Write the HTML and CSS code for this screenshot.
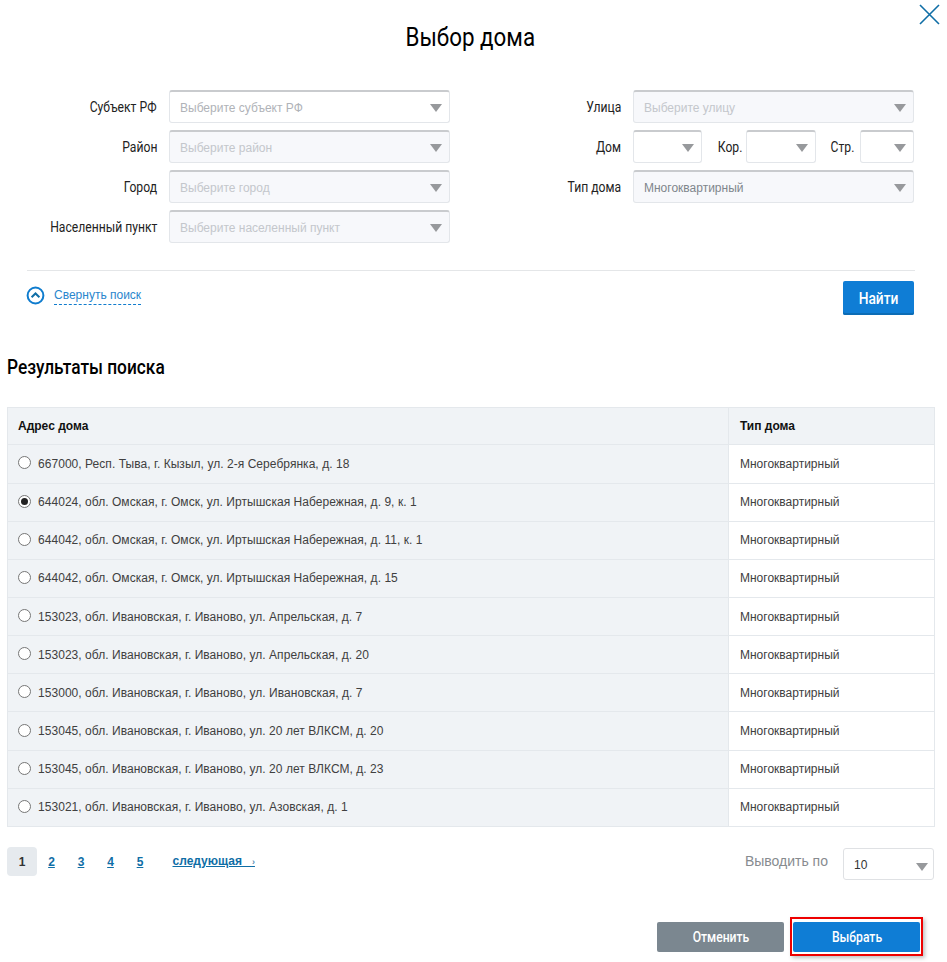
FILE: index.html
```html
<!DOCTYPE html>
<html lang="ru">
<head>
<meta charset="utf-8">
<title>Выбор дома</title>
<link rel="stylesheet" href="styles.css">
</head>
<body>
<main class="modal">
  <button class="close" aria-label="Закрыть"><svg width="21" height="21" viewBox="0 0 21 21"><path d="M1 1l19 19M20 1L1 20" stroke="#0f6ea6" stroke-width="1.6" fill="none"/></svg></button>
  <h1 class="title"><span>Выбор дома</span></h1>
  <section class="search">
    <div class="col">
      <div class="row"><label class="lab"><span>Субъект РФ</span></label><div class="sel white"><span class="ph">Выберите субъект РФ</span><i class="arrow"></i></div></div>
      <div class="row"><label class="lab"><span>Район</span></label><div class="sel"><span class="ph">Выберите район</span><i class="arrow"></i></div></div>
      <div class="row"><label class="lab"><span>Город</span></label><div class="sel"><span class="ph">Выберите город</span><i class="arrow"></i></div></div>
      <div class="row"><label class="lab"><span>Населенный пункт</span></label><div class="sel"><span class="ph">Выберите населенный пункт</span><i class="arrow"></i></div></div>
    </div>
    <div class="col">
      <div class="row"><label class="lab"><span>Улица</span></label><div class="sel"><span class="ph">Выберите улицу</span><i class="arrow"></i></div></div>
      <div class="row"><label class="lab"><span>Дом</span></label>
        <div class="house">
          <div class="sel s-dom white"><i class="arrow"></i></div>
          <label class="lab lab2 l-kor"><span>Кор.</span></label>
          <div class="sel s-kor white"><i class="arrow"></i></div>
          <label class="lab lab2 l-str"><span>Стр.</span></label>
          <div class="sel s-str white"><i class="arrow"></i></div>
        </div>
      </div>
      <div class="row"><label class="lab"><span>Тип дома</span></label><div class="sel"><span class="val">Многоквартирный</span><i class="arrow"></i></div></div>
    </div>
  </section>
  <div class="actions">
    <a class="toggle" href="#"><svg width="19" height="19" viewBox="0 0 19 19"><circle cx="9.5" cy="9.5" r="7.9" fill="none" stroke="#0f7cce" stroke-width="2"/><path d="M5.6 11.2l3.9-3.7 3.9 3.7" fill="none" stroke="#0f6ea6" stroke-width="2"/></svg><span>Свернуть поиск</span></a>
    <button class="btn find"><span>Найти</span></button>
  </div>
  <h2 class="results"><span>Результаты поиска</span></h2>
  <div class="tbl">
    <div class="cell head">Адрес дома</div><div class="cell head c2">Тип дома</div>
    <div class="cell"><i class="radio"></i>667000, Респ. Тыва, г. Кызыл, ул. 2-я Серебрянка, д. 18</div><div class="cell c2">Многоквартирный</div>
    <div class="cell"><i class="radio on"></i>644024, обл. Омская, г. Омск, ул. Иртышская Набережная, д. 9, к. 1</div><div class="cell c2">Многоквартирный</div>
    <div class="cell"><i class="radio"></i>644042, обл. Омская, г. Омск, ул. Иртышская Набережная, д. 11, к. 1</div><div class="cell c2">Многоквартирный</div>
    <div class="cell"><i class="radio"></i>644042, обл. Омская, г. Омск, ул. Иртышская Набережная, д. 15</div><div class="cell c2">Многоквартирный</div>
    <div class="cell"><i class="radio"></i>153023, обл. Ивановская, г. Иваново, ул. Апрельская, д. 7</div><div class="cell c2">Многоквартирный</div>
    <div class="cell"><i class="radio"></i>153023, обл. Ивановская, г. Иваново, ул. Апрельская, д. 20</div><div class="cell c2">Многоквартирный</div>
    <div class="cell"><i class="radio"></i>153000, обл. Ивановская, г. Иваново, ул. Ивановская, д. 7</div><div class="cell c2">Многоквартирный</div>
    <div class="cell"><i class="radio"></i>153045, обл. Ивановская, г. Иваново, ул. 20 лет ВЛКСМ, д. 20</div><div class="cell c2">Многоквартирный</div>
    <div class="cell"><i class="radio"></i>153045, обл. Ивановская, г. Иваново, ул. 20 лет ВЛКСМ, д. 23</div><div class="cell c2">Многоквартирный</div>
    <div class="cell"><i class="radio"></i>153021, обл. Ивановская, г. Иваново, ул. Азовская, д. 1</div><div class="cell c2">Многоквартирный</div>
  </div>
  <div class="pager">
    <nav class="pages">
      <span class="page cur">1</span><a class="page" href="#">2</a><a class="page" href="#">3</a><a class="page" href="#">4</a><a class="page" href="#">5</a>
      <a class="next" href="#">следующая &nbsp; <small>›</small></a>
    </nav>
    <div class="perpage"><span>Выводить по</span><div class="sel white s-per"><span class="num">10</span><i class="arrow"></i></div></div>
  </div>
  <div class="footer">
    <button class="btn cancel"><span>Отменить</span></button>
    <div class="focus"><button class="btn pick"><span>Выбрать</span></button></div>
  </div>
</main>
</body>
</html>
```
FILE: styles.css
```css
* { box-sizing: border-box; }
html, body { margin: 0; background: #fff; }
body { font-family: "Liberation Sans", Arial, sans-serif; color: #333; width: 947px; height: 962px; overflow: hidden; }
.modal { position: relative; height: 962px; padding: 0 12px 0 7px; }
.close { position: absolute; left: 919px; top: 4px; width: 21px; height: 21px; padding: 0; border: 0; background: none; display: block; }
.title { margin: 0; padding: 21px 2px 0 0; height: 90px; font: 400 26px/32px Roboto, sans-serif; color: #000; text-align: center; }
.title span { display: inline-block; transform: scaleX(.86); }
.search { display: flex; height: 180px; }
.col { width: 464px; flex: none; display: flex; flex-direction: column; gap: 8px; }
.row { display: flex; align-items: flex-start; height: 32px; }
.lab { font: 400 15px/18px Roboto, sans-serif; color: #222; width: 150px; text-align: right; margin-right: 12px; flex: none; padding-top: 8px; white-space: nowrap; }
.lab span { display: inline-block; transform: scaleX(.81); transform-origin: right center; }
.sel { position: relative; width: 281px; height: 33px; border: 1px solid #e3e6ea; border-top: 2px solid #c9cbce; border-radius: 3px; background: #f7f8fb; font-size: 12px; line-height: 32px; padding-left: 10px; flex: none; }
.sel.white { background: #fff; }
.ph { color: #c4c7cc; }
.white .ph { color: #b0b3b8; }
.val { color: #7f868c; }
.arrow { position: absolute; right: 7px; top: 12px; width: 0; height: 0; border-left: 6px solid transparent; border-right: 6px solid transparent; border-top: 8px solid #97999c; }
.house { display: flex; align-items: flex-start; width: 281px; }
.s-dom { width: 69px; }
.s-kor { width: 70px; }
.s-str { width: 54px; }
.lab2 { width: 44px; margin-right: 0; }
.l-kor { padding-right: 4px; }
.l-str { padding-right: 6px; }
.actions { display: flex; justify-content: space-between; align-items: flex-start; height: 71px; margin-left: 20px; margin-right: 20px; border-top: 1px solid #e4e6e8; padding-top: 10px; padding-right: 1px; }
.toggle { display: flex; align-items: center; gap: 9px; margin-top: 5px; text-decoration: none; font-size: 12px; color: #2a86cd; }
.toggle svg { margin-left: -1px; }
.toggle span { border-bottom: 1px dashed #0f7cce; line-height: 15px; padding-bottom: 1px; margin-top: 1px; }
.btn { border: 0; border-radius: 2px; color: #fff; font-family: Roboto, sans-serif; font-weight: 500; padding: 0; display: block; }
.btn span { display: inline-block; transform: scaleX(.81); }
.find { width: 71px; height: 34px; background: #0f7dd5; font-size: 17px; box-shadow: inset 0 -2px 0 #0c6cb5; }
.results { margin: 0; height: 66px; font: 500 20px/24px Roboto, sans-serif; color: #000; padding-top: 14px; }
.results span { display: inline-block; transform: scaleX(.865); transform-origin: left center; }
.tbl { display: grid; grid-template-columns: 720px 206px; grid-template-rows: 37.4px repeat(10, 38.16px); width: 928px; height: 420px; border: 1px solid #e4e8ec; border-bottom: 0; }
.cell { display: flex; align-items: center; background: #f0f3f6; border-bottom: 1px solid #e4e8ec; padding-left: 10px; font-size: 12px; letter-spacing: .045px; color: #404040; white-space: nowrap; }
.c2 { background: #fff; border-left: 1px solid #e4e8ec; letter-spacing: 0; padding-left: 11px; }
.head, .head.c2 { background: #f0f3f6; font-weight: 700; color: #111; letter-spacing: 0; }
.radio { width: 13px; height: 13px; border: 1px solid #767676; border-radius: 50%; background: #fff; margin-right: 7px; margin-top: -2px; flex: none; position: relative; }
.radio.on::after { content: ""; position: absolute; left: 2px; top: 2px; width: 7px; height: 7px; background: #222; border-radius: 50%; }
.pager { display: flex; justify-content: space-between; margin-top: 20px; height: 70px; }
.pages { display: flex; align-items: flex-start; }
.page { width: 30px; height: 29px; display: flex; align-items: center; justify-content: center; font-size: 12px; font-weight: 700; color: #0f6ea6; text-decoration: underline; margin-right: -0.5px; }
.page.cur { background: #e6eaee; border-radius: 4px; color: #333; text-decoration: none; }
.next { margin-left: 18px; font-size: 12px; font-weight: 700; color: #0f6ea6; line-height: 29px; white-space: nowrap; }
.next small { font-size: 9px; color: #5c8fb3; }
.perpage { display: flex; align-items: flex-start; margin-right: 1px; }
.perpage > span { font-size: 14px; color: #878b8f; margin-right: 15px; line-height: 29px; }
.s-per { width: 91px; height: 32px; margin-top: 1px; border-top-width: 1px; border-color: #dfe1e4; font-size: 12px; color: #333; line-height: 32px; }
.s-per .arrow { right: 5px; top: 14px; }
.footer { display: flex; justify-content: flex-end; padding-right: 12px; gap: 6px; align-items: flex-start; height: 38px; }
.footer .btn { width: 127px; height: 30px; font-size: 15px; }
.cancel { background: #7b8790; margin-top: 5px; }
.pick { background: #0f7dd5; }
.focus { border: 2px solid #e00; padding: 3px 1px 2px; box-shadow: 2px 2px 4px rgba(0,0,0,.25); }
```
